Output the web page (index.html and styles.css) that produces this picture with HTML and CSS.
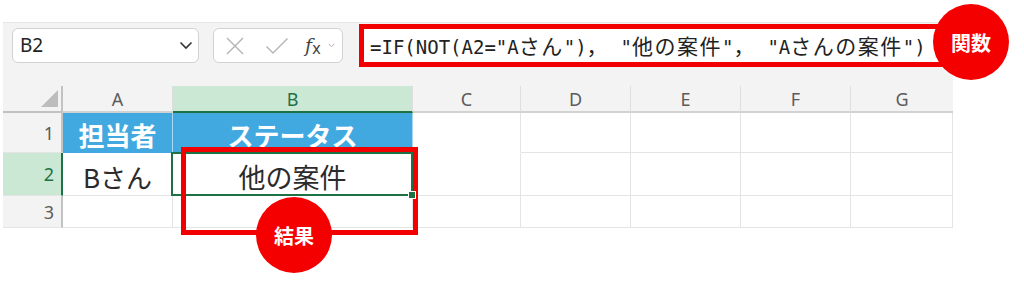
FILE: index.html
```html
<!DOCTYPE html>
<html lang="ja">
<head>
<meta charset="utf-8">
<link rel="stylesheet" href="styles.css">
</head>
<body>
<div class="page">
  <div class="sheet">
    <div class="toolbar">
      <div class="namebox">
        <span class="ref">B2</span>
        <svg class="chev" width="14" height="9" viewBox="0 0 14 9"><path d="M1.5 1.5 L7 7 L12.5 1.5" fill="none" stroke="#333" stroke-width="1.6"/></svg>
      </div>
      <div class="fxbox">
        <svg class="ico" width="20" height="20" viewBox="0 0 20 20"><path d="M2 2 L18 18 M18 2 L2 18" stroke="#b3b3b3" stroke-width="1.4" fill="none"/></svg>
        <svg class="ico" width="24" height="18" viewBox="0 0 24 18"><path d="M1.5 9.5 L8 16 L22.5 1.5" stroke="#b3b3b3" stroke-width="1.4" fill="none"/></svg>
        <span class="fx"><i>f</i><span class="x">x</span></span>
        <svg class="mini" width="7" height="5" viewBox="0 0 7 5"><path d="M0.8 0.8 L3.5 3.8 L6.2 0.8" fill="none" stroke="#b0b0b0" stroke-width="1"/></svg>
      </div>
      <div class="formula">=IF(NOT(A2="A<span class="jp">さん</span>")<span class="jp">，</span> "<span class="jp">他の案件</span>"<span class="jp">，</span> "A<span class="jp">さんの案件</span>")</div>
    </div>
    <div class="grid">
      <div class="corner"><span class="tri"></span></div>
      <div class="colh">A</div>
      <div class="colh on">B</div>
      <div class="colh">C</div>
      <div class="colh">D</div>
      <div class="colh">E</div>
      <div class="colh">F</div>
      <div class="colh last">G</div>

      <div class="rowh">1</div>
      <div class="cell head">担当者</div>
      <div class="cell head">ステータス</div>
      <div class="cell nob"></div>
      <div class="cell"></div>
      <div class="cell"></div>
      <div class="cell"></div>
      <div class="cell"></div>

      <div class="rowh on">2</div>
      <div class="cell val">Bさん</div>
      <div class="cell val sel">他の案件</div>
      <div class="cell"></div>
      <div class="cell"></div>
      <div class="cell"></div>
      <div class="cell"></div>
      <div class="cell"></div>

      <div class="rowh">3</div>
      <div class="cell"></div>
      <div class="cell"></div>
      <div class="cell"></div>
      <div class="cell"></div>
      <div class="cell"></div>
      <div class="cell"></div>
      <div class="cell"></div>
    </div>

    <div class="result-box"></div>
    <div class="badge badge-fn">関数</div>
    <div class="badge badge-res">結果</div>
  </div>
</div>
</body>
</html>
```

FILE: styles.css
```css
html, body {
  margin: 0;
  padding: 0;
  background: #ffffff;
}

.page {
  width: 1024px;
  height: 282px;
  padding: 22px 0 0 3px;
  box-sizing: border-box;
  overflow: hidden;
}

.sheet {
  position: relative;
  width: 950px;
  background: #f3f3f3;
  font-family: "Noto Sans", "Noto Sans CJK JP", sans-serif;
}

.toolbar {
  display: flex;
  align-items: flex-start;
  height: 64px;
  padding: 1px 0 0 9px;
  box-sizing: border-box;
  border-top: 1px solid #e6e6e6;
}

.namebox {
  display: flex;
  align-items: center;
  justify-content: space-between;
  width: 187px;
  height: 35px;
  margin-top: 4px;
  padding: 0 5px 0 7px;
  box-sizing: border-box;
  background: #ffffff;
  border: 1px solid #d2d2d2;
  border-radius: 6px;
}

.ref {
  font-size: 19px;
  color: #222;
  line-height: 1;
}

.chev {
  display: block;
}

.fxbox {
  display: flex;
  align-items: center;
  width: 130px;
  height: 35px;
  margin: 4px 0 0 14px;
  padding: 0 0 0 11px;
  box-sizing: border-box;
  background: #ffffff;
  border: 1px solid #d2d2d2;
  border-radius: 6px;
}

.ico {
  display: block;
  margin-right: 20px;
}

.ico + .ico {
  margin-right: 16px;
}

.fx {
  font-family: "DejaVu Serif", "Liberation Serif", serif;
  font-size: 19px;
  color: #444;
  line-height: 1;
}

.fx i {
  font-style: italic;
}

.fx .x {
  font-family: "DejaVu Sans", sans-serif;
  font-size: 15px;
  position: relative;
  top: 2px;
}

.mini {
  display: block;
  margin-left: 7px;
}

.formula {
  width: 587px;
  height: 43px;
  margin-left: 16px;
  padding-left: 6px;
  box-sizing: border-box;
  background: #ffffff;
  border: 5px solid #f20000;
  font-family: "DejaVu Sans Mono", "Noto Sans CJK JP", monospace;
  font-size: 19px;
  line-height: 33px;
  color: #222;
  white-space: nowrap;
  overflow: hidden;
}

.formula .jp {
  font-family: "Noto Sans CJK JP", sans-serif;
  font-size: 21px;
  letter-spacing: 1.5px;
}

.grid {
  display: grid;
  grid-template-columns: 60px 110px 240px 108px 110px 110px 110px 102px;
  grid-template-rows: 27px 40px 43px 32px;
}

.corner {
  position: relative;
  border-right: 2px solid #c2c2c2;
  border-bottom: 2px solid #c2c2c2;
}

.tri {
  position: absolute;
  right: 3px;
  bottom: 4px;
  width: 0;
  height: 0;
  border-left: 17px solid transparent;
  border-bottom: 17px solid #bdbdbd;
}

.colh {
  display: flex;
  align-items: center;
  justify-content: center;
  font-size: 18px;
  color: #5b5b5b;
  border-right: 1px solid #dedede;
  border-bottom: 2px solid #d2d2d2;
  padding-top: 1px;
  box-sizing: border-box;
}

.colh.last {
  border-right: none;
}

.colh.on {
  background: #cae8d4;
  color: #1e7145;
  border-bottom: 2px solid #1e7145;
}

.rowh {
  display: flex;
  align-items: center;
  justify-content: flex-end;
  padding-right: 7px;
  font-size: 18px;
  color: #5b5b5b;
  border-right: 2px solid #c2c2c2;
  border-bottom: 1px solid #e4e4e4;
  box-sizing: border-box;
}

.rowh.on {
  background: #cae8d4;
  color: #1e7145;
  border-right: 2px solid #1e7145;
}

.cell {
  background: #ffffff;
  border-right: 1px solid #e4e4e4;
  border-bottom: 1px solid #e4e4e4;
  box-sizing: border-box;
  display: flex;
  align-items: center;
  justify-content: center;
  font-family: "Noto Sans CJK JP", sans-serif;
}

.cell.nob {
  border-bottom-color: #ffffff;
}

.cell.head {
  background: #42a9e0;
  color: #ffffff;
  font-weight: 700;
  font-size: 26px;
  border-right: 1px solid #a9d6f0;
  border-bottom: none;
  padding-top: 2px;
}

.cell.val {
  font-size: 26px;
  color: #2b2b2b;
  padding-top: 4px;
}

.cell.sel {
  position: relative;
  font-size: 27px;
}

.cell.sel::after {
  content: "";
  position: absolute;
  left: -2px;
  top: -1px;
  right: -1px;
  bottom: -1px;
  border: 2px solid #1e7145;
}

.cell.sel::before {
  content: "";
  position: absolute;
  right: -4px;
  bottom: -4px;
  width: 6px;
  height: 6px;
  background: #1e7145;
  border: 1px solid #ffffff;
  z-index: 1;
}

.result-box {
  position: absolute;
  left: 178px;
  top: 125px;
  width: 237px;
  height: 88px;
  box-sizing: border-box;
  border: 5px solid #f20000;
}

.badge {
  position: absolute;
  display: flex;
  align-items: center;
  justify-content: center;
  border-radius: 50%;
  background: #f50000;
  color: #ffffff;
  font-family: "Noto Sans CJK JP", sans-serif;
  font-weight: 700;
  font-size: 20px;
}

.badge-fn {
  left: 930px;
  top: -18px;
  width: 76px;
  height: 76px;
}

.badge-res {
  left: 253px;
  top: 175px;
  width: 76px;
  height: 76px;
}
```
